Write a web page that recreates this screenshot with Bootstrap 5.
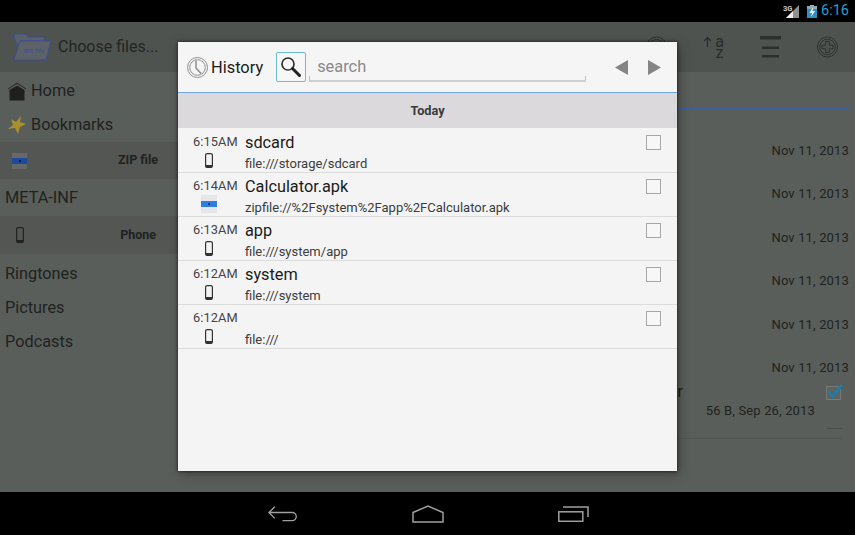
<!DOCTYPE html>
<html lang="en"><head><meta charset="utf-8">
<link href="https://cdn.jsdelivr.net/npm/bootstrap@5.3.0/dist/css/bootstrap.min.css" rel="stylesheet">
<style>
html,body{margin:0;height:100%;overflow:hidden}
body{font-family:Roboto,"Liberation Sans",sans-serif;background:#000}
.scr{position:relative;width:855px;height:535px;display:flex;flex-direction:column;overflow:hidden}
.stat{height:22px;background:#000;color:#2a9fd0;flex:none;padding-right:6px;font-size:14.5px}
.abar{height:50px;background:#4f534f;flex:none;color:#232523;font-size:16px;padding:0 17px 0 12px}
.abar .ttl{margin-left:6px}
.acts{gap:36px;color:#2a2c2a}
.azb{width:21px;height:22px;gap:3px}
.azt{font-size:16px;line-height:11px;text-align:center;width:9px}
.bgm{flex:1;background:#5a5e5a;display:flex;min-height:0;color:#202220}
.lp{width:178px;flex:none;padding-top:1px}
.rp{flex:1;padding-right:6px}
.lrow{height:34px;font-size:16.3px;padding:2px 0 0 8px;gap:5px}
.lplain{padding-left:5px}
.lmeta{height:37px}
.lgap{margin-top:2px}
.lhd{height:37px;background:#535653;font-size:12.5px;font-weight:700;padding-left:12px;justify-content:space-between;padding-right:20px}
.lhd2{height:38px;padding-left:16px;padding-right:22px}
.lsep{border-top:1px solid #3a5f9c}
.rline{border-top:1px solid #3a5f9c;margin-top:36px;height:0}
.rsp{height:32px}
.dt{height:43.4px;font-size:13px;text-align:right;color:#202220;letter-spacing:.15px}
.dtlast{height:26px}
.ckrow{height:15px;font-size:16px;padding-right:6px}
.nmr{width:505px;text-align:right;line-height:15px}
.szl{font-size:13px;line-height:17px;margin-top:3px;text-align:right;padding-right:34px;letter-spacing:.15px}
.dash{border-top:1px solid #474a47;width:15px;margin:9px 7px 0 auto}
.fline{border-top:1px solid #525552;margin:9px 7px 0 0}
.snav{height:43px;background:#000;flex:none;padding-left:268px;gap:114px}
.dlg{position:absolute;left:178px;top:42px;width:499px;height:429px;background:#f4f4f4;box-shadow:0 0 3px rgba(0,0,0,.7),2px 3px 10px rgba(0,0,0,.35);color:#1c1c1c}
.dh{height:51px;border-bottom:1px solid #6fa8ee;padding:0 16px 0 9px;background:#f5f5f5}
.dh .hist{font-size:16.4px;margin:2px 0 0 3px}
.sbtn{width:30px;height:30px;border:1px solid #6bbcd6;border-radius:2px;margin-left:13px;background:#f7f7f7}
.srch{position:relative;width:277px;height:30px;margin-left:3px;border-bottom:2px solid #cfcfcf;padding:3px 0 0 8px;font-size:16.4px;color:#8a8a8a}
.srch::before,.srch::after{content:"";position:absolute;bottom:0;width:1px;height:4px;background:#bdbdbd}
.srch::before{left:0}
.srch::after{right:0}
.arw{gap:20px}
.tod{height:35px;background:#dbd9db;font-size:12.7px;font-weight:700;color:#3a3a3a}
.hlist{padding-top:1px}
.hrow{height:44px;border-bottom:1px solid #dcdcdc;padding-right:16px}
.tc{width:67px;flex:none;font-size:12.8px;color:#444}
.tm{line-height:14px;margin-top:6px;padding-left:15px;letter-spacing:.1px}
.ic{height:16px;margin-top:4px;text-align:center;padding-right:5px;line-height:16px}
.icz{margin-top:2px}
.tx{flex:1;min-width:0}
.nm{font-size:16.3px;line-height:19px;margin-top:4px;height:19px;color:#1a1a1a}
.pt{font-size:13px;line-height:15px;margin-top:4px;color:#3c3c3c}
.cb{width:15px;height:15px;border:1px solid #a6a6a6;background:#f7f7f7;flex:none;margin-top:6px}
svg{display:inline-block;vertical-align:top;flex:none}
</style></head><body>
<div class="scr">
 <div class="stat d-flex align-items-center justify-content-end">
  <svg width="16" height="16" viewBox="0 0 16 16"><path d="M16 2V15H3z" fill="#8f8f8f"/><path d="M10 8V15H3z" fill="#eee"/><text x="0" y="8" font-size="7.5" font-family="Roboto" font-weight="700" fill="#ccc">3G</text></svg>
  <svg class="ms-2" width="10" height="13" viewBox="0 0 10 13"><rect y="1" width="10" height="12" fill="#2a93c4"/><rect x="3" width="4" height="2" fill="#9fb8c4"/><rect y="1" width="10" height="3" fill="#8fa7b3"/><path d="M6 2 2.5 8H5L4 12 8 6H5.500z" fill="#fff"/></svg>
  <span class="ms-1">6:16</span>
 </div>
 <div class="abar d-flex align-items-center">
  <svg width="40" height="28" viewBox="0 0 40 28"><path d="M2 1h12l2 3h16v4H8L6 13 2 4z" fill="#5a6268" stroke="#3f4d94"/><path d="M8 8h31l-5 19H2z" fill="#5c6268" stroke="#3f4d94"/><text x="12" y="20" font-size="7" font-style="italic" font-family="Roboto" fill="#3f4d94">arc hiv</text></svg>
  <span class="ttl">Choose files...</span>
  <div class="acts ms-auto d-flex">
   <svg width="21" height="22" viewBox="0 0 21 22"><circle cx="10.5" cy="11" r="10" fill="none" stroke="#2f312f"/><circle cx="10.5" cy="11" r="7.5" fill="none" stroke="#2f312f"/></svg>
   <div class="azb d-flex">
    <svg width="9" height="12" viewBox="0 0 9 12"><path d="M4.500 11V2M1 5l3.500-3.500L8 5" fill="none" stroke="#2a2c2a" stroke-width="1.200"/></svg>
    <div class="azt"><div>a</div><div>z</div></div>
   </div>
   <svg width="21" height="22" viewBox="0 0 21 22"><rect width="21" height="3.5" fill="#2d2f2d"/><rect x="2" y="10.5" width="17" height="2.5" fill="#2d2f2d"/><rect x="2" y="19" width="17" height="2.5" fill="#2d2f2d"/></svg>
   <svg width="21" height="22" viewBox="0 0 21 22"><circle cx="10.5" cy="11" r="10" fill="none" stroke="#2f312f"/><circle cx="10.5" cy="11" r="7.8" fill="none" stroke="#2f312f"/><path d="M8.700 5.500h3.600v3.700h3.700v3.600h-3.700v3.700H8.700v-3.700H5v-3.600h3.700z" fill="none" stroke="#2f312f"/></svg>
  </div>
 </div>
 <div class="bgm">
  <div class="lp">
   <div class="lrow d-flex align-items-center"><svg width="18" height="19" viewBox="0 0 18 19"><path d="M0 6.500 9 .5l9 6v1L9 1.800 0 7.500z" fill="#2a2a2a"/><path d="M1.500 8 9 3.500 16.500 8v10.500h-15z" fill="#1f1f1f"/></svg>Home</div>
   <div class="lrow d-flex align-items-center"><svg width="18" height="18" viewBox="0 0 18 18"><path d="M13 0 12 6 18 8 12 11 10 18 7 12 0 13 5 9 3 3 8 6z" fill="#a8902c"/></svg>Bookmarks</div>
   <div class="lsep"></div>
   <div class="lhd d-flex align-items-center"><svg width="15" height="16" viewBox="0 0 15 16"><rect width="15" height="16" fill="#666a66"/><rect y="5" width="15" height="6" fill="#1d4a9e"/><rect x="7" y="7" width="2" height="2" fill="#0b1f45"/></svg><span>ZIP file</span></div>
   <div class="lrow lplain lmeta d-flex align-items-center">META-INF</div>
   <div class="lhd lhd2 d-flex align-items-center"><svg width="8" height="16" viewBox="0 0 8 16"><rect x=".6" y=".6" width="6.800" height="14.800" rx="1.500" fill="none" stroke="#222" stroke-width="1.200"/><rect x="1" y="13" width="6" height="2.500" fill="#222"/></svg><span>Phone</span></div>
   <div class="lrow lplain lgap d-flex align-items-center">Ringtones</div>
   <div class="lrow lplain d-flex align-items-center">Pictures</div>
   <div class="lrow lplain d-flex align-items-center">Podcasts</div>
  </div>
  <div class="rp">
   <div class="rline"></div>
   <div class="rsp"></div>
   <div class="dt">Nov 11, 2013</div><div class="dt">Nov 11, 2013</div><div class="dt">Nov 11, 2013</div><div class="dt">Nov 11, 2013</div><div class="dt">Nov 11, 2013</div><div class="dt dtlast">Nov 11, 2013</div>
   <div class="ckrow d-flex justify-content-between">
    <span class="nmr">ar</span>
    <svg width="17" height="16" viewBox="0 0 17 16"><rect x=".5" y="2.500" width="14" height="13" fill="#5f635f" stroke="#767a76"/><path d="M3 8l3.500 4.500L16 1" fill="none" stroke="#1b7ea6" stroke-width="2.800"/></svg>
   </div>
   <div class="szl">56 B, Sep 26, 2013</div>
   <div class="dash"></div>
   <div class="fline"></div>
  </div>
 </div>
 <div class="snav d-flex align-items-center">
  <svg width="30" height="18" viewBox="0 0 31 18"><path d="M7 1.500 1 7.500 7 13.500M1 7.500H25a4.200 4.200 0 0 1 0 8.400H15" fill="none" stroke="#a0a0a0" stroke-width="1.400"/></svg>
  <svg width="32" height="18" viewBox="0 0 32 18"><path d="M1 7.500 16 1l15 6.500V17H1z" fill="none" stroke="#a0a0a0" stroke-width="1.500"/></svg>
  <svg width="31" height="16" viewBox="0 0 31 16"><rect x=".8" y="5.800" width="24" height="9.500" fill="none" stroke="#a0a0a0" stroke-width="1.500"/><path d="M5 1h25v10" fill="none" stroke="#a0a0a0" stroke-width="1.500"/></svg>
 </div>
 <div class="dlg d-flex flex-column">
  <div class="dh d-flex align-items-center">
   <svg width="21" height="21" viewBox="0 0 21 21"><circle cx="10.500" cy="10.500" r="10" fill="none" stroke="#8f8f8f"/><circle cx="10.500" cy="10.500" r="7.800" fill="none" stroke="#8f8f8f"/><path d="M9 3.500v7.500l5 5.500" fill="none" stroke="#888" stroke-width="1.400"/></svg>
   <span class="hist">History</span>
   <div class="sbtn d-flex align-items-center justify-content-center"><svg width="22" height="22" viewBox="0 0 22 22"><circle cx="8" cy="8" r="6" fill="none" stroke="#333" stroke-width="1.700"/><path d="M12.500 12.500 19.500 19.500" stroke="#222" stroke-width="3" stroke-linecap="round"/></svg></div>
   <div class="srch d-flex align-items-center">search</div>
   <div class="arw ms-auto d-flex align-items-center">
    <svg width="13" height="15" viewBox="0 0 13 15"><path d="M13 0V15L0 7.500z" fill="#858585"/></svg>
    <svg width="13" height="15" viewBox="0 0 13 15"><path d="M0 0V15L13 7.500z" fill="#858585"/></svg>
   </div>
  </div>
  <div class="tod d-flex align-items-center justify-content-center">Today</div>
  <div class="hlist">
  <div class="hrow d-flex"><div class="tc"><div class="tm">6:15AM</div><div class="ic"><svg width="8" height="15" viewBox="0 0 8 15"><rect x=".6" y=".6" width="6.800" height="13.800" rx="1.500" fill="none" stroke="#333" stroke-width="1.200"/><rect x="1" y="12" width="6" height="2.500" fill="#333"/></svg></div></div><div class="tx"><div class="nm">sdcard</div><div class="pt">file:///storage/sdcard</div></div><div class="cb"></div></div>
  <div class="hrow d-flex"><div class="tc"><div class="tm">6:14AM</div><div class="ic icz"><svg width="16" height="18" viewBox="0 0 16 18"><rect width="16" height="18" fill="#e4e6ea"/><rect y="6" width="16" height="6" fill="#2f7de0"/><rect x="7" y="8" width="2" height="2" fill="#123c7a"/></svg></div></div><div class="tx"><div class="nm">Calculator.apk</div><div class="pt">zipfile://%2Fsystem%2Fapp%2FCalculator.apk</div></div><div class="cb"></div></div>
  <div class="hrow d-flex"><div class="tc"><div class="tm">6:13AM</div><div class="ic"><svg width="8" height="15" viewBox="0 0 8 15"><rect x=".6" y=".6" width="6.800" height="13.800" rx="1.500" fill="none" stroke="#333" stroke-width="1.200"/><rect x="1" y="12" width="6" height="2.500" fill="#333"/></svg></div></div><div class="tx"><div class="nm">app</div><div class="pt">file:///system/app</div></div><div class="cb"></div></div>
  <div class="hrow d-flex"><div class="tc"><div class="tm">6:12AM</div><div class="ic"><svg width="8" height="15" viewBox="0 0 8 15"><rect x=".6" y=".6" width="6.800" height="13.800" rx="1.500" fill="none" stroke="#333" stroke-width="1.200"/><rect x="1" y="12" width="6" height="2.500" fill="#333"/></svg></div></div><div class="tx"><div class="nm">system</div><div class="pt">file:///system</div></div><div class="cb"></div></div>
  <div class="hrow d-flex"><div class="tc"><div class="tm">6:12AM</div><div class="ic"><svg width="8" height="15" viewBox="0 0 8 15"><rect x=".6" y=".6" width="6.800" height="13.800" rx="1.500" fill="none" stroke="#333" stroke-width="1.200"/><rect x="1" y="12" width="6" height="2.500" fill="#333"/></svg></div></div><div class="tx"><div class="nm"></div><div class="pt">file:///</div></div><div class="cb"></div></div>
  </div>
 </div>
</div>
<script src="https://cdn.jsdelivr.net/npm/bootstrap@5.3.0/dist/js/bootstrap.bundle.min.js"></script>
</body></html>
